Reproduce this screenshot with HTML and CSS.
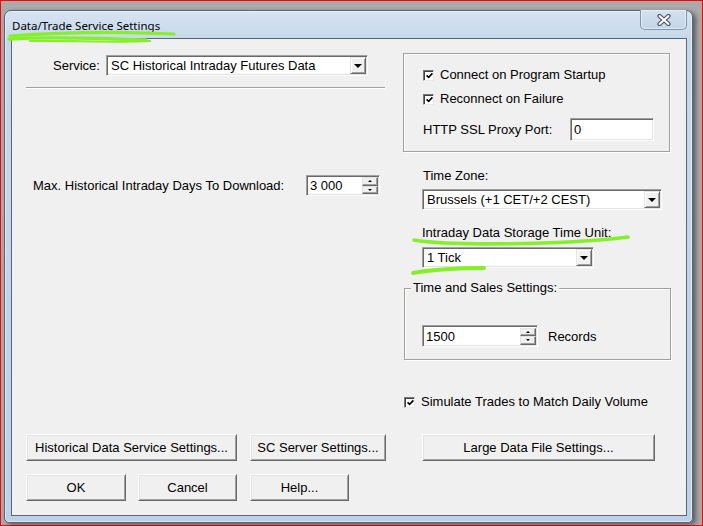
FILE: index.html
```html
<!DOCTYPE html>
<html>
<head>
<meta charset="utf-8">
<title>Data/Trade Service Settings</title>
<link rel="stylesheet" href="styles.css">
</head>
<body>
<div class="screen">
  <div class="window">
    <div class="titlebar">
      <span class="title">Data/Trade Service Settings</span>
      <div class="close">
        <svg width="14" height="12" viewBox="0 0 14 12">
          <path d="M2.5 2 L11.5 10 M11.5 2 L2.5 10" stroke="#3c4656" stroke-width="4.2" stroke-linecap="round"/>
          <path d="M2.5 2 L11.5 10 M11.5 2 L2.5 10" stroke="#ffffff" stroke-width="2.2" stroke-linecap="round"/>
        </svg>
      </div>
    </div>
    <div class="client">
      <div class="top">
        <div class="left">
          <div class="service-row">
            <span class="service-label">Service:</span>
            <div class="combo w-service">
              <span class="combo-text">SC Historical Intraday Futures Data</span>
              <span class="drop"><i class="tri-down"></i></span>
            </div>
          </div>
          <div class="separator"></div>
          <div class="days-row">
            <span class="days-label">Max. Historical Intraday Days To Download:</span>
            <div class="spin w-days">
              <span class="spin-text">3 000</span>
              <span class="spin-btns">
                <span class="spin-btn"><i class="tri-up-s"></i></span>
                <span class="spin-btn"><i class="tri-down-s"></i></span>
              </span>
            </div>
          </div>
        </div>
        <div class="right">
          <div class="etched-box">
            <div class="check-row">
              <span class="check"><svg width="7" height="7" viewBox="0 0 7 7"><path d="M0.6 3.4 L2.6 5.4 L6.4 1.4" fill="none" stroke="#000" stroke-width="1.6"/></svg></span>
              <span>Connect on Program Startup</span>
            </div>
            <div class="check-row second">
              <span class="check"><svg width="7" height="7" viewBox="0 0 7 7"><path d="M0.6 3.4 L2.6 5.4 L6.4 1.4" fill="none" stroke="#000" stroke-width="1.6"/></svg></span>
              <span>Reconnect on Failure</span>
            </div>
            <div class="proxy-row">
              <span class="proxy-label">HTTP SSL Proxy Port:</span>
              <div class="field w-proxy">0</div>
            </div>
          </div>
          <div class="field-label tz-label">Time Zone:</div>
          <div class="combo w-tz">
            <span class="combo-text">Brussels (+1 CET/+2 CEST)</span>
            <span class="drop"><i class="tri-down"></i></span>
          </div>
          <div class="field-label unit-label">Intraday Data Storage Time Unit:</div>
          <div class="combo w-unit">
            <span class="combo-text">1 Tick</span>
            <span class="drop"><i class="tri-down"></i></span>
          </div>
          <fieldset class="group">
            <legend>Time and Sales Settings:</legend>
            <div class="records-row">
              <div class="spin w-records">
                <span class="spin-text">1500</span>
                <span class="spin-btns">
                  <span class="spin-btn"><i class="tri-up-s"></i></span>
                  <span class="spin-btn"><i class="tri-down-s"></i></span>
                </span>
              </div>
              <span class="records-label">Records</span>
            </div>
          </fieldset>
          <div class="check-row simulate">
            <span class="check"><svg width="7" height="7" viewBox="0 0 7 7"><path d="M0.6 3.4 L2.6 5.4 L6.4 1.4" fill="none" stroke="#000" stroke-width="1.6"/></svg></span>
            <span>Simulate Trades to Match Daily Volume</span>
          </div>
        </div>
      </div>
      <div class="btn-row row1">
        <button class="btn w-hist">Historical Data Service Settings...</button>
        <button class="btn w-sc">SC Server Settings...</button>
        <button class="btn w-large">Large Data File Settings...</button>
      </div>
      <div class="btn-row row2">
        <button class="btn w-ok">OK</button>
        <button class="btn w-cancel">Cancel</button>
        <button class="btn w-help">Help...</button>
      </div>
    </div>
  </div>
  <svg class="marks" width="703" height="526" viewBox="0 0 703 526">
    <g fill="none" stroke="#84f028" stroke-linecap="round" stroke-linejoin="round">
      <path d="M10 36 C50 33 110 31 174 34" stroke-width="3.2"/>
      <path d="M9 39 C40 37 95 38 146 40" stroke-width="3.4"/>
      <path d="M30 41 C60 40 120 43 150 41" stroke-width="2.2"/>
      <path d="M414 240 C450 246 560 245 628 237" stroke-width="3.6"/>
      <path d="M413 273 C430 270 460 268 484 268" stroke-width="4"/>
    </g>
  </svg>
</div>
</body>
</html>
```
FILE: styles.css
```css
* {
  box-sizing: border-box;
}

html, body {
  margin: 0;
  padding: 0;
}

body {
  width: 703px;
  height: 526px;
  overflow: hidden;
  font-family: "Liberation Sans", Arial, sans-serif;
  font-size: 13px;
  color: #000;
}

.screen {
  position: relative;
  width: 703px;
  height: 526px;
  border: 1px solid #ff0000;
  background: #aaaaaa;
  padding: 9px 0 0 3px;
}

.window {
  width: 689px;
  height: 513px;
  border: 1px solid #55657a;
  border-radius: 7px 7px 5px 5px;
  background: linear-gradient(180deg, #d6e3f1 0px, #c6d8eb 30px, #bcd1e8 100%);
  padding: 0 5px 6px 6px;
  box-shadow: 3px 2px 5px rgba(0, 0, 0, 0.45), inset 0 0 0 1px rgba(255, 255, 255, 0.5);
}

.titlebar {
  height: 27px;
  display: flex;
  align-items: flex-start;
}

.title {
  font-family: "Noto Sans", "Open Sans", sans-serif;
  font-size: 11.5px;
  line-height: 16px;
  padding-left: 1px;
  margin-top: 7px;
  color: #000;
}

.close {
  margin-left: auto;
  width: 47px;
  height: 20px;
  margin-top: -1px;
  border: 1px solid #8394aa;
  border-top: none;
  border-radius: 0 0 5px 5px;
  background: linear-gradient(180deg, #d3e0ee, #c4d5e9);
  box-shadow: inset 0 0 0 1px rgba(255, 255, 255, 0.45);
  display: flex;
  align-items: center;
  justify-content: center;
}

.client {
  width: 676px;
  height: 478px;
  background: #f0f0f0;
  border: 1px solid #5c6676;
  padding: 14px 0 0 14px;
}

.top {
  display: flex;
  gap: 18px;
}

.left {
  width: 359px;
}

.right {
  width: 267px;
}

/* shared controls */

.combo,
.spin,
.field {
  height: 21px;
  background: #fff;
  border: 1px solid;
  border-color: #a0a0a0 #ffffff #ffffff #a0a0a0;
  box-shadow: inset 1px 1px 0 #696969, inset -1px -1px 0 #e3e3e3;
  display: flex;
  align-items: center;
  line-height: 15px;
  white-space: nowrap;
}

.combo-text {
  padding-left: 4px;
}

.drop {
  margin-left: auto;
  margin-right: 1px;
  width: 16px;
  height: 17px;
  background: #f0f0f0;
  border: 1px solid;
  border-color: #e3e3e3 #696969 #696969 #e3e3e3;
  box-shadow: inset 1px 1px 0 #fff, inset -1px -1px 0 #a0a0a0;
  display: flex;
  align-items: center;
  justify-content: center;
}

.tri-down {
  width: 0;
  height: 0;
  border-left: 4px solid transparent;
  border-right: 4px solid transparent;
  border-top: 4px solid #000;
  margin-top: 1px;
}

.spin-text {
  padding-left: 3px;
}

.spin-btns {
  margin-left: auto;
  margin-right: 1px;
  height: 19px;
  display: flex;
  flex-direction: column;
  padding: 1px 0;
}

.spin-btn {
  flex: 1;
  width: 16px;
  background: #f0f0f0;
  border: 1px solid;
  border-color: #e3e3e3 #696969 #696969 #e3e3e3;
  box-shadow: inset -1px -1px 0 #a0a0a0;
  display: flex;
  align-items: center;
  justify-content: center;
}

.tri-up-s {
  width: 0;
  height: 0;
  border-left: 2px solid transparent;
  border-right: 2px solid transparent;
  border-bottom: 2px solid #000;
}

.tri-down-s {
  width: 0;
  height: 0;
  border-left: 2px solid transparent;
  border-right: 2px solid transparent;
  border-top: 2px solid #000;
}

.check-row {
  display: flex;
  align-items: center;
  height: 16px;
  line-height: 16px;
  white-space: nowrap;
}

.check {
  width: 11px;
  height: 11px;
  margin-right: 6px;
  background: #fff;
  border: 1px solid;
  border-color: #7a7a7a #e8e8e8 #e8e8e8 #7a7a7a;
  box-shadow: inset 1px 1px 0 #404040;
  display: flex;
  align-items: center;
  justify-content: center;
  padding: 1px 0 0 1px;
}

/* left column */

.service-row {
  display: flex;
  align-items: center;
  margin-top: 2px;
  padding-left: 27px;
  height: 21px;
}

.service-label {
  width: 53px;
}

.w-service {
  width: 262px;
}

.separator {
  margin-top: 11px;
  height: 2px;
  border-top: 1px solid #a0a0a0;
  border-bottom: 1px solid #ffffff;
}

.days-row {
  display: flex;
  align-items: center;
  margin-top: 86px;
  padding-left: 7px;
  height: 21px;
}

.days-label {
  width: 273px;
  white-space: nowrap;
}

.w-days {
  width: 74px;
}

/* right column */

.etched-box {
  height: 99px;
  border: 1px solid #a0a0a0;
  box-shadow: inset 1px 1px 0 #fff, 1px 1px 0 #fff;
  padding: 13px 0 0 19px;
}

.check-row.second {
  margin-top: 8px;
}

.proxy-row {
  display: flex;
  align-items: center;
  margin-top: 11px;
  height: 23px;
}

.proxy-label {
  width: 147px;
  white-space: nowrap;
}

.w-proxy {
  width: 84px;
  height: 23px;
  padding-left: 3px;
}

.field-label {
  line-height: 16px;
  height: 16px;
  white-space: nowrap;
}

.tz-label {
  margin-top: 16px;
  margin-left: 20px;
}

.w-tz {
  margin-top: 5px;
  margin-left: 19px;
  width: 240px;
}

.unit-label {
  margin-top: 15px;
  margin-left: 19px;
}

.w-unit {
  margin-top: 6px;
  margin-left: 19px;
  width: 172px;
}

.group {
  margin: 12px 0 0 1px;
  width: 267px;
  min-width: 0;
  border: 1px solid #a0a0a0;
  box-shadow: inset 1px 1px 0 #fff, 1px 1px 0 #fff;
  padding: 0 0 12px 6px;
}

.group legend {
  padding: 0 2px;
  line-height: 16px;
  background: #f0f0f0;
}

.records-row {
  display: flex;
  align-items: center;
  margin-top: 29px;
  margin-left: 11px;
  height: 22px;
}

.w-records {
  width: 116px;
  height: 22px;
}

.records-label {
  margin-left: 10px;
}

.check-row.simulate {
  margin-top: 34px;
  margin-left: 1px;
}

/* buttons */

.btn-row {
  display: flex;
  height: 27px;
}

.row1 {
  margin-top: 24px;
}

.row2 {
  margin-top: 13px;
}

.btn {
  height: 27px;
  margin: 0;
  padding: 0;
  font-family: "Liberation Sans", Arial, sans-serif;
  font-size: 13px;
  color: #000;
  background: #f0f0f0;
  border: 1px solid;
  border-color: #ffffff #696969 #696969 #ffffff;
  box-shadow: inset 1px 1px 0 #e3e3e3, inset -1px -1px 0 #a0a0a0;
  border-radius: 0;
  text-align: center;
  white-space: nowrap;
}

.w-hist {
  width: 211px;
}

.w-sc {
  width: 136px;
  margin-left: 13px;
}

.w-large {
  width: 233px;
  margin-left: 36px;
}

.w-ok {
  width: 100px;
}

.w-cancel {
  width: 99px;
  margin-left: 12px;
}

.w-help {
  width: 99px;
  margin-left: 13px;
}

/* highlighter annotations drawn over the screenshot */

.marks {
  position: absolute;
  top: -1px;
  left: -1px;
  pointer-events: none;
}
```
